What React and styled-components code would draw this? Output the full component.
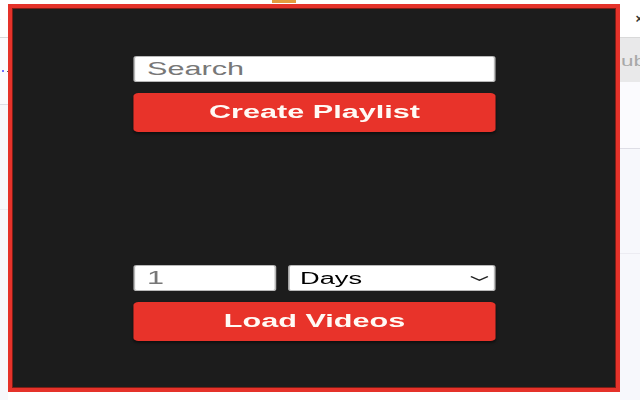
import React from 'react';
import styled, { createGlobalStyle } from 'styled-components';

const GlobalStyle = createGlobalStyle`
  html, body {
    margin: 0;
    padding: 0;
    background: #ffffff;
    overflow: hidden;
  }
  body {
    font-family: "Liberation Sans", Arial, sans-serif;
  }
`;

const Page = styled.div`
  display: flex;
  width: 640px;
  height: 400px;
  background: #ffffff;
`;

/* page behind the popup, only its edges show */
const Strip = styled.div`
  width: ${(p) => p.width}px;
  flex: none;
  display: flex;
  flex-direction: column;
  overflow: hidden;
  background: #f7f8fc;
`;

const StripTop = styled.div`
  height: 37px;
  background: #ffffff;
  border-bottom: 1px solid #d9d9d9;
  display: flex;
  align-items: center;
  justify-content: ${(p) => (p.end ? 'flex-end' : 'flex-start')};
  font-size: 13px;
  color: #333;
  line-height: 1;
`;

const Glyph = styled.span`
  margin: ${(p) => p.margin};
  font-weight: bold;
`;

const StripBand = styled.div`
  height: 66px;
  background: #fbfbfe;
  border-bottom: 1px solid #dedee6;
  display: flex;
  align-items: center;
`;

const Dot = styled.span`
  width: 2px;
  height: 2px;
  border-radius: 50%;
  margin-left: 2px;
  background: #4d4dff;
`;

const TinyDot = styled.span`
  width: 2px;
  height: 1px;
  margin-left: 3px;
  background: #555;
`;

const GreyTab = styled.div`
  height: 44px;
  width: 100%;
  background: #e9e9ea;
  display: flex;
  align-items: center;
  overflow: hidden;
  color: #a8a8a8;
  font-size: 15px;
  white-space: nowrap;
  span {
    display: inline-block;
    transform: scaleX(1.5);
    transform-origin: left center;
    margin-left: 1px;
  }
`;

const StripFaint = styled.div`
  height: 104px;
  border-bottom: 1px solid #ececf2;
`;

const Middle = styled.div`
  width: 612px;
  flex: none;
  display: flex;
  flex-direction: column;
`;

const TopTabs = styled.div`
  height: 4px;
  display: flex;
`;

const OrangeTab = styled.div`
  margin-left: 264px;
  width: 24px;
  height: 3px;
  background: #e39b3e;
`;

const Popup = styled.div`
  height: 388px;
  box-sizing: border-box;
  border: 4px solid #e5322a;
  box-shadow: inset 0 0 0 1px #7d1d16;
  background: #1c1c1c;
  display: flex;
  flex-direction: column;
  align-items: center;
  padding: 48px 0;
`;

/* the popup was captured stretched sideways, so its column is scaled */
const Column = styled.div`
  width: 213px;
  transform: scaleX(1.7);
  display: flex;
  flex-direction: column;
`;

const TextField = styled.input`
  box-sizing: border-box;
  width: ${(p) => p.width || '100%'};
  height: 26px;
  margin: 0;
  padding: 0 7px;
  border: 1px solid #b9b9b9;
  border-radius: 2px;
  background: #ffffff;
  font-family: "Liberation Sans", Arial, sans-serif;
  font-size: 18px;
  color: #222;
  outline: none;
  &::placeholder {
    color: #777777;
  }
`;

const RedButton = styled.button`
  height: 39px;
  margin-top: 11px;
  border: none;
  border-radius: 3px;
  background: #e8332a;
  color: #fffaf5;
  font-family: "Liberation Sans", Arial, sans-serif;
  font-weight: bold;
  font-size: 18px;
  box-shadow: 0 2px 2px rgba(0, 0, 0, 0.45);
  cursor: pointer;
`;

const Results = styled.div`
  height: 133px;
  flex: none;
`;

const FilterRow = styled.div`
  display: flex;
  gap: 7px;
`;

const SelectWrap = styled.div`
  position: relative;
  width: 122px;
  height: 26px;
`;

const RangeSelect = styled.select`
  appearance: none;
  -webkit-appearance: none;
  box-sizing: border-box;
  width: 100%;
  height: 100%;
  margin: 0;
  padding: 0 0 0 6px;
  border: 1px solid #b9b9b9;
  border-radius: 2px;
  background-color: #ffffff;
  font-family: "Liberation Sans", Arial, sans-serif;
  font-size: 16px;
  color: #000;
  outline: none;
`;

const Chevron = styled.svg`
  position: absolute;
  right: 4px;
  top: 11px;
  pointer-events: none;
`;

export default function App() {
  return (
    <>
      <GlobalStyle />
      <Page>
        <Strip width={8}>
          <StripTop>
            <Glyph margin="0 0 0 -4px">›</Glyph>
          </StripTop>
          <StripBand>
            <Dot />
            <TinyDot />
          </StripBand>
          <StripFaint />
        </Strip>

        <Middle>
          <TopTabs>
            <OrangeTab />
          </TopTabs>
          <Popup>
            <Column>
              <TextField type="text" placeholder="Search" />
              <RedButton>Create Playlist</RedButton>
              <Results />
              <FilterRow>
                <TextField type="text" placeholder="1" width="84px" />
                <SelectWrap>
                  <RangeSelect defaultValue="days">
                    <option value="days">Days</option>
                    <option value="weeks">Weeks</option>
                    <option value="months">Months</option>
                  </RangeSelect>
                  <Chevron width="11" height="5" viewBox="0 0 11 5">
                    <path d="M0.5 0.5 L5.5 4.3 L10.5 0.5" fill="none" stroke="#222" strokeWidth="1.1" />
                  </Chevron>
                </SelectWrap>
              </FilterRow>
              <RedButton>Load Videos</RedButton>
            </Column>
          </Popup>
        </Middle>

        <Strip width={20}>
          <StripTop end>
            <Glyph margin="0 -3px 0 0">×</Glyph>
          </StripTop>
          <GreyTab>
            <span>ub</span>
          </GreyTab>
          <StripBand />
          <StripFaint />
        </Strip>
      </Page>
    </>
  );
}
